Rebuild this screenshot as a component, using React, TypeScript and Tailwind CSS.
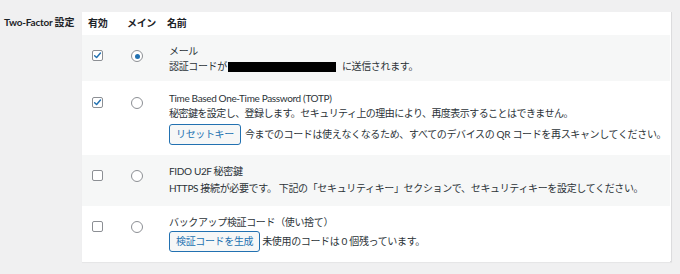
import React from 'react';

function Checkbox({ checked }: { checked?: boolean }) {
  return (
    <span className="flex h-[11px] w-[11px] items-center justify-center rounded-[2px] border border-[#8c8f94] bg-white">
      {checked && (
        <svg viewBox="0 0 10 10" className="h-[9px] w-[9px]">
          <path d="M1.8 5.2 L4 7.3 L8.3 2.3" fill="none" stroke="#2271b1" strokeWidth="1.6" strokeLinecap="round" strokeLinejoin="round" />
        </svg>
      )}
    </span>
  );
}

function Radio({ checked }: { checked?: boolean }) {
  return (
    <span className="flex h-[12px] w-[12px] items-center justify-center rounded-full border border-[#8c8f94] bg-white">
      {checked && <span className="h-[5px] w-[5px] rounded-full bg-[#2271b1]" />}
    </span>
  );
}

function Button({ children }: { children: React.ReactNode }) {
  return (
    <span className="inline-flex h-[21px] items-center rounded-[3px] border border-[#2271b1] bg-[#f6f7f7] px-[6px] text-[#2271b1]">
      {children}
    </span>
  );
}

type Row = {
  enabled?: boolean;
  primary?: boolean;
  striped?: boolean;
  boxTop: string;
  cellPad: string;
  body: React.ReactNode;
};

const rows: Row[] = [
  {
    enabled: true,
    primary: true,
    striped: true,
    boxTop: 'pt-[15px]',
    cellPad: 'pt-[9px] pb-[7px]',
    body: (
      <>
        <div>メール</div>
        <div className="flex items-center">
          認証コードが
          <span className="ml-[1px] mr-[6px] inline-block h-[10px] w-[108px] bg-black" />
          に送信されます。
        </div>
      </>
    ),
  },
  {
    enabled: true,
    boxTop: 'pt-[16px]',
    cellPad: 'pt-[10px] pb-[10px]',
    body: (
      <>
        <div>Time Based One-Time Password (TOTP)</div>
        <div className="tracking-[-0.55px]">秘密鍵を設定し、登録します。セキュリティ上の理由により、再度表示することはできません。</div>
        <div className="mt-[3px] flex items-center gap-[4px]">
          <Button>リセットキー</Button>
          <span>今までのコードは使えなくなるため、すべてのデバイスの QR コードを再スキャンしてください。</span>
        </div>
      </>
    ),
  },
  {
    striped: true,
    boxTop: 'pt-[15px]',
    cellPad: 'pt-[9px] pb-[10px]',
    body: (
      <>
        <div>FIDO U2F 秘密鍵</div>
        <div className="mt-[2px]">HTTPS 接続が必要です。 下記の「セキュリティキー」セクションで、セキュリティキーを設定してください。</div>
      </>
    ),
  },
  {
    boxTop: 'pt-[15px]',
    cellPad: 'pt-[9px] pb-[10px]',
    body: (
      <>
        <div>バックアップ検証コード（使い捨て）</div>
        <div className="mt-[1px] flex items-center gap-[2px]">
          <Button>検証コードを生成</Button>
          <span>未使用のコードは 0 個残っています。</span>
        </div>
      </>
    ),
  },
];

export default function App() {
  return (
    <div className="flex h-[274px] w-[680px] bg-[#f0f0f1] pt-[12px] font-['Lato','Noto_Sans_CJK_JP',sans-serif] text-[10px] leading-[15px] tracking-[-0.35px] text-[#2c3338]">
      <div className="w-[82px] shrink-0 pl-[4px] pt-[3px] font-bold tracking-[-0.2px] text-[#1d2327]">Two-Factor 設定</div>

      <div className="h-[250px] w-[590px] border-r border-b border-[#dcdcde] bg-white pr-[1px] shadow-[0_1px_1px_rgba(0,0,0,0.04)]">
        <div className="flex h-[23px] items-center font-bold text-[#1d2327]">
          <div className="w-[39px] shrink-0 pl-[6px]">有効</div>
          <div className="w-[39px] shrink-0 pl-[6px]">メイン</div>
          <div className="flex-1 pl-[7px]">名前</div>
        </div>

        {rows.map((r, i) => (
          <div key={i} className={`flex items-start ${r.striped ? 'bg-[#f6f7f7]' : 'bg-white'}`}>
            <div className={`w-[39px] shrink-0 pl-[10px] ${r.boxTop}`}>
              <Checkbox checked={r.enabled} />
            </div>
            <div className={`w-[39px] shrink-0 pl-[10px] ${r.boxTop}`}>
              <Radio checked={r.primary} />
            </div>
            <div className={`flex-1 pl-[9px] ${r.cellPad}`}>{r.body}</div>
          </div>
        ))}
      </div>
    </div>
  );
}
